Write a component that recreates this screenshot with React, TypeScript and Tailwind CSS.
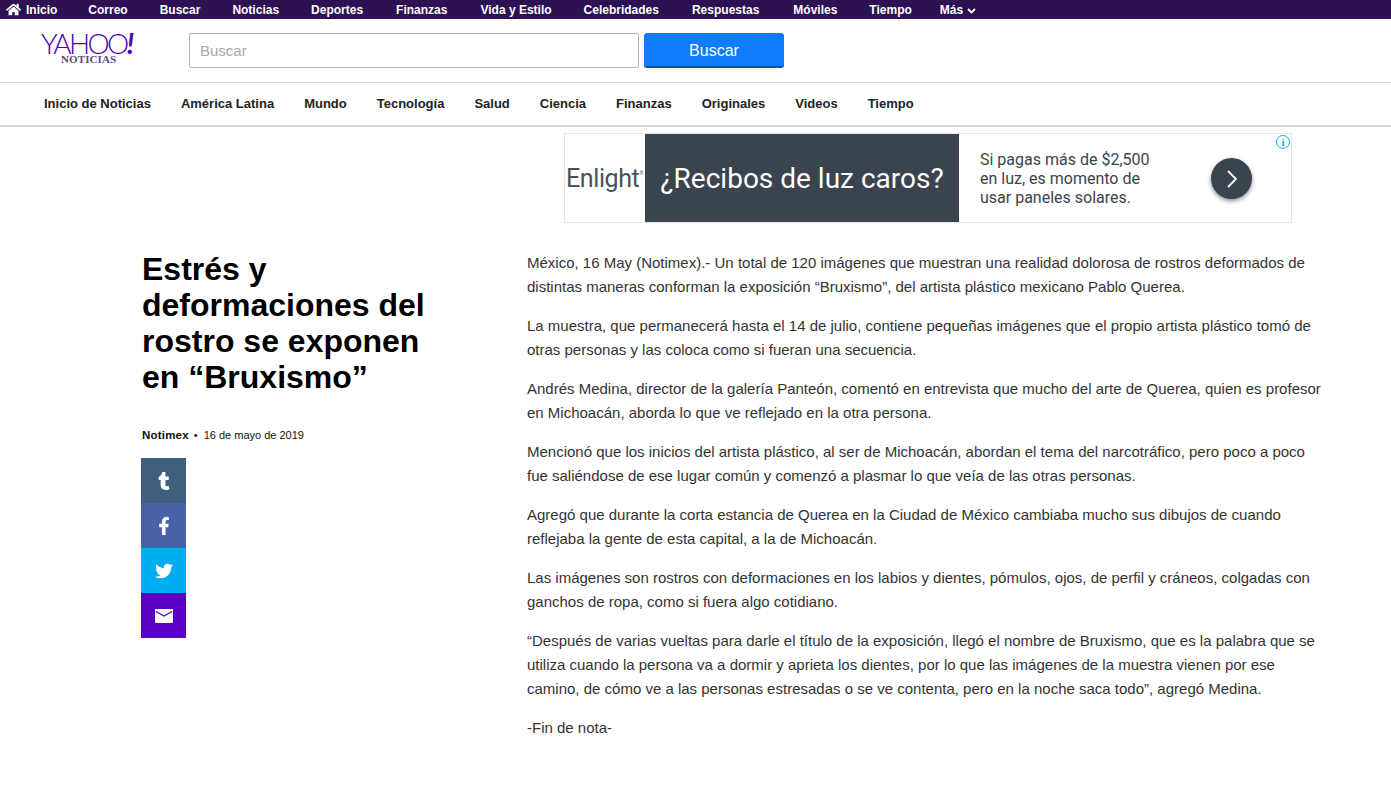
import React from "react";
import { FaTumblr, FaFacebookF, FaTwitter, FaHome } from "react-icons/fa";

const top: [string, string][] = [
  ["Correo", "ml-[31px]"],
  ["Buscar", "ml-[32px]"],
  ["Noticias", "ml-[32px]"],
  ["Deportes", "ml-[32px]"],
  ["Finanzas", "ml-[33px]"],
  ["Vida y Estilo", "ml-[33px]"],
  ["Celebridades", "ml-[32px]"],
  ["Respuestas", "ml-[33px]"],
  ["Móviles", "ml-[34px]"],
  ["Tiempo", "ml-[32px]"],
];
const sub = ["Inicio de Noticias", "América Latina", "Mundo", "Tecnología", "Salud", "Ciencia", "Finanzas", "Originales", "Videos", "Tiempo"];

const paras: string[][] = [
  ["México, 16 May (Notimex).- Un total de 120 imágenes que muestran una realidad dolorosa de rostros deformados de", "distintas maneras conforman la exposición “Bruxismo”, del artista plástico mexicano Pablo Querea."],
  ["La muestra, que permanecerá hasta el 14 de julio, contiene pequeñas imágenes que el propio artista plástico tomó de", "otras personas y las coloca como si fueran una secuencia."],
  ["Andrés Medina, director de la galería Panteón, comentó en entrevista que mucho del arte de Querea, quien es profesor", "en Michoacán, aborda lo que ve reflejado en la otra persona."],
  ["Mencionó que los inicios del artista plástico, al ser de Michoacán, abordan el tema del narcotráfico, pero poco a poco", "fue saliéndose de ese lugar común y comenzó a plasmar lo que veía de las otras personas."],
  ["Agregó que durante la corta estancia de Querea en la Ciudad de México cambiaba mucho sus dibujos de cuando", "reflejaba la gente de esta capital, a la de Michoacán."],
  ["Las imágenes son rostros con deformaciones en los labios y dientes, pómulos, ojos, de perfil y cráneos, colgadas con", "ganchos de ropa, como si fuera algo cotidiano."],
  ["“Después de varias vueltas para darle el título de la exposición, llegó el nombre de Bruxismo, que es la palabra que se", "utiliza cuando la persona va a dormir y aprieta los dientes, por lo que las imágenes de la muestra vienen por ese", "camino, de cómo ve a las personas estresadas o se ve contenta, pero en la noche saca todo”, agregó Medina."],
  ["-Fin de nota-"],
];

export default function App() {
  return (
    <div className="min-h-[798px] bg-white font-['Liberation_Sans',Arial,sans-serif] text-[#1a1a1a]">
      <div className="flex h-[19px] items-center bg-[#2d1152] pl-[6px] text-[12px] font-bold text-white">
        <FaHome className="mr-[5px] h-[15px] w-[15px]" />
        <span>Inicio</span>
        {top.map(([t, m]) => (
          <span key={t} className={m}>{t}</span>
        ))}
        <span className="ml-[28px]">Más</span>
        <svg width="9" height="6" viewBox="0 0 9 6" className="ml-[4px] mt-[2px]">
          <path d="M1 1l3.5 3.5L8 1" fill="none" stroke="#fff" strokeWidth="1.8" />
        </svg>
      </div>

      <div className="flex h-[64px] items-start border-b border-[#dcdcdc]">
        <div className="ml-[41px] mt-[13px] flex w-[148px] flex-col">
          <div className="h-[22px] w-[93px] whitespace-nowrap font-['Lato',sans-serif] text-[28px] font-light leading-[22px] tracking-[-2.6px] text-[#4c02b4]">
            YAHOO<span className="font-bold italic">!</span>
          </div>
          <div className="ml-[20px] font-['Liberation_Serif',serif] text-[11px] font-bold leading-[10px] tracking-[0.1px] text-[#5b4a82]">NOTICIAS</div>
        </div>
        <div className="mt-[14px] flex h-[35px] w-[450px] items-center rounded-[2px] border border-[#b5b5b5] pl-[10px] pt-[1px] text-[15px] text-[#a9a9a9]">Buscar</div>
        <div className="ml-[5px] mt-[14px] flex h-[35px] w-[140px] items-center justify-center rounded-[3px] border-b-2 border-[#0b4fb0] bg-[#0f7bfd] pt-[3px] text-[16px] text-white">Buscar</div>
      </div>

      <div className="flex h-[44px] items-center gap-[30px] border-b-2 border-[#d8dadc] pl-[44px] text-[13px] font-bold text-[#222]">
        {sub.map((s) => (
          <span key={s}>{s}</span>
        ))}
      </div>

      <div className="ml-[564px] mt-[6px] flex h-[90px] w-[728px] items-stretch border border-[#e6e6e6] font-['Roboto',sans-serif]">
        <div className="flex w-[80px] items-center pl-[1px] text-[25px] leading-none tracking-[-0.4px] text-[#48525a]">
          Enlight<span className="mb-[10px] text-[5px]">®</span>
        </div>
        <div className="flex w-[314px] items-center justify-center bg-[#3a444e] pt-[2px] text-[28px] text-white">¿Recibos de luz caros?</div>
        <div className="ml-[21px] flex w-[231px] flex-col justify-center pt-[1px] text-[16px] leading-[19px] text-[#3a444e]">
          <span>Si pagas más de $2,500</span>
          <span>en luz, es momento de</span>
          <span>usar paneles solares.</span>
        </div>
        <div className="mt-[24px] flex h-[41px] w-[41px] items-center justify-center rounded-full bg-[#3a444e] shadow-[0_2px_4px_rgba(0,0,0,0.45)]">
          <svg width="12" height="20" viewBox="0 0 12 20">
            <path d="M2 2l8 8-8 8" fill="none" stroke="#fff" strokeWidth="1.8" />
          </svg>
        </div>
        <div className="ml-[24px] mt-[1px] flex h-[14px] w-[14px] items-center justify-center rounded-full border border-[#11b0e8] font-['Liberation_Serif',serif] text-[11px] font-bold leading-none text-[#11b0e8]">i</div>
      </div>

      <div className="mt-[28px] flex items-start pl-[141px]">
        <div className="w-[386px] shrink-0">
          <h1 className="ml-[1px] text-[32px] font-bold leading-[36px] text-black">
            Estrés y<br />deformaciones del<br />rostro se exponen<br />en “Bruxismo”
          </h1>
          <div className="ml-[1px] mt-[33px] flex items-center text-[11px] leading-[14px] text-[#111]">
            <span className="text-[11.5px] font-bold tracking-[0.2px]">Notimex</span>
            <span className="ml-[5px] mr-[6px]">•</span>
            <span>16 de mayo de 2019</span>
          </div>
          <div className="mt-[16px] flex w-[45px] flex-col text-white">
            <div className="flex h-[45px] items-center justify-center bg-[#3f5f7f]"><FaTumblr className="h-[18px] w-[18px]" /></div>
            <div className="flex h-[45px] items-center justify-center bg-[#4a63a8]"><FaFacebookF className="h-[18px] w-[18px]" /></div>
            <div className="flex h-[45px] items-center justify-center bg-[#00aeef]"><FaTwitter className="h-[18px] w-[18px]" /></div>
            <div className="flex h-[45px] items-center justify-center bg-[#5a00c4]">
              <svg width="18" height="14" viewBox="0 0 18 14">
                <path d="M1 0h16a1 1 0 0 1 1 1v12a1 1 0 0 1-1 1H1a1 1 0 0 1-1-1V1a1 1 0 0 1 1-1z" fill="#fff" />
                <path d="M1 2.5l8 4.5 8-4.5" fill="none" stroke="#5a00c4" strokeWidth="1.2" />
              </svg>
            </div>
          </div>
        </div>
        <div className="flex flex-col gap-[15px] text-[15px] leading-[24px] text-[#333]">
          {paras.map((p, i) => (
            <p key={i} className="whitespace-nowrap">
              {p.map((l, j) => (
                <span key={j} className="block">{l}</span>
              ))}
            </p>
          ))}
        </div>
      </div>
    </div>
  );
}
